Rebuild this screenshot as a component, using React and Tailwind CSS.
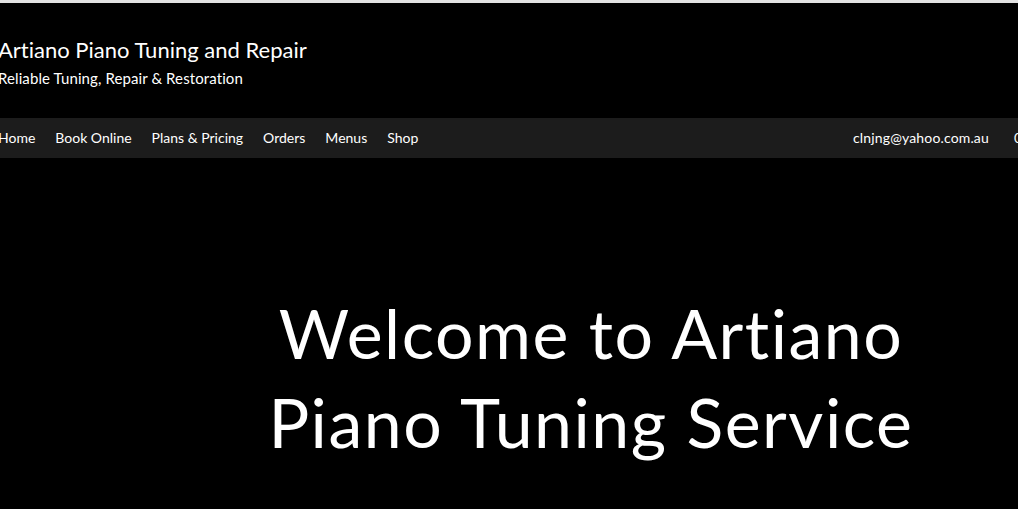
import React from "react";

const links = ["Home", "Book Online", "Plans & Pricing", "Orders", "Menus", "Shop"];

export default function App() {
  return (
    <div className="min-h-[509px] w-full overflow-hidden bg-black text-white font-['Lato',_'Liberation_Sans',_sans-serif] [font-variant-ligatures:none]">
      <div className="h-[3px] bg-[#e2e2e2]" />
      <header className="-ml-[2px] pt-[32px] h-[115px]">
        <h1 className="text-[22px] leading-[30px] whitespace-nowrap">Artiano Piano Tuning and Repair</h1>
        <p className="text-[15px] leading-[22px] mt-[2px] tracking-[0.1px] whitespace-nowrap">Reliable Tuning, Repair &amp; Restoration</p>
      </header>
      <nav className="h-[40px] bg-[#1c1c1c] flex items-center pb-[2px] text-[14px] whitespace-nowrap">
        <ul className="-ml-[2px] flex gap-[20px]">
          {links.map((l) => (
            <li key={l}>{l}</li>
          ))}
        </ul>
        <div className="ml-auto w-[165px] shrink-0 flex gap-[25px]">
          <span className="tracking-[0.15px]">clnjng@yahoo.com.au</span>
          <span>0412 345 678</span>
        </div>
      </nav>
      <section className="flex justify-center pt-[130px] pl-[164px]">
        <h2 className="text-[68px] leading-[89px] tracking-[1.5px] text-center w-[720px]">
          Welcome to Artiano Piano Tuning Service
        </h2>
      </section>
    </div>
  );
}
